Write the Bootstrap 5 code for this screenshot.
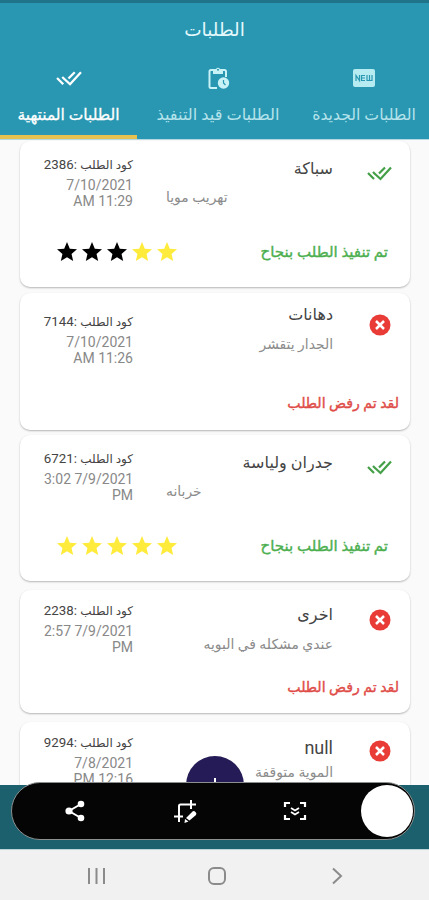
<!DOCTYPE html>
<html lang="ar" dir="rtl">
<head>
<meta charset="utf-8">
<meta name="viewport" content="width=device-width, initial-scale=1">
<title>الطلبات</title>
<link href="https://cdn.jsdelivr.net/npm/bootstrap@5.3.0/dist/css/bootstrap.min.css" rel="stylesheet">
<style>
body{font-family:Roboto,"DejaVu Sans",sans-serif;background:#fafafa;height:900px;overflow:hidden;color:#444}
svg{display:block;flex:none}
.app-head{height:139px;background:#2997b1;border-top:3px solid #1f7489;color:#e4f8fc}
.app-title{height:53px;padding-top:3px;font-size:18.5px}
.tab-item{width:130px;height:83px;color:#b5e3ec;font-size:15.7px;white-space:nowrap;border-bottom:4px solid transparent}
.tab-item.wide{font-size:16.2px}
.tab-item.current{color:#fff;border-color:#e5c24f;width:137px;font-size:15.5px;-webkit-text-stroke:.3px currentColor}
.tab-item span{line-height:24px;margin-top:12px}
.tab-item svg{margin-top:9px}
.orders{height:646px;padding:2px 19px 0 20px;border-top:1px solid #b4d9e3;overflow:hidden}
.order{border:0;border-radius:10px;box-shadow:0 1px 2px rgba(0,0,0,.28);width:390px;flex:none;height:146px;margin-bottom:6px;padding:0 11px 0 24px;
 --t:28px;--d:56px;--c:24px;--i:32px;--s:111px}
.order.first{margin-top:-1px}
.order.rej{height:137px;margin-bottom:5px;--t:22px;--d:51px;--c:29px}
.order.low{height:123px;margin-bottom:9px;--t:25px;--d:54px;--c:21px;--i:30px;--s:98px}
.order.before-low{margin-bottom:9px}
.order.last{height:136px;--t:26px;--d:50px;--i:29px}
.upper{height:calc(var(--s) - 13px)}
.state-icon{width:38px;padding-top:calc(var(--i) - 12px);padding-right:7px}
.subject{width:167px;margin-right:28px;padding-top:calc(var(--t) - 12px);white-space:nowrap}
.name{font-size:16px;line-height:24px}
.latin{font-size:18px}
.desc{font-size:13.9px;line-height:20px;color:#8b8b8b;margin-top:calc(var(--d) - var(--t) - 22px)}
.done .desc{text-align:left}
.meta{width:89px;margin-right:auto;padding-top:calc(var(--c) - 9px);font-size:13.3px;white-space:nowrap}
.code{line-height:18px;color:#444}
.code span{font-size:12px}
.when{font-size:14px;line-height:15.5px;color:#888;margin-top:4px;direction:ltr;text-align:right}
.lower{height:26px}
.msg{font-size:14.1px;-webkit-text-stroke:.4px currentColor;white-space:nowrap}
.done .msg{color:#4caf50;padding-right:11px;font-size:15px}
.rej .msg{color:#df4c48}
.stars{direction:ltr;gap:1px;margin-left:11px}
.fab{position:absolute;left:186px;top:756px;width:58px;height:58px;border-radius:50%;background:#251b57;color:#fff}
.dock{height:65px;background:#1b606c;border-bottom:1px solid #b9d4d8}
.pill{position:absolute;left:11px;top:782px;width:404px;height:58px;border-radius:29px;background:#050505;border:1px solid #8b8f8f;direction:ltr;padding:0 1px 0 50px;color:#fff}
.tool-group{width:246px}
.knob{width:52px;height:52px;border-radius:50%;background:#fff}
.sysnav{height:50px;background:#f1f1f1;direction:ltr;padding:2px 82px 0 86px}
</style>
</head>
<body class="position-relative d-flex flex-column">
<svg width="0" height="0" class="position-absolute">
 <defs>
  <g id="checks" fill="none" stroke="currentColor" stroke-width="2.2"><path d="M1 12l6 6M6 11l2.500 2.500M7.500 12.500L13.500 18 24 6.500M12 12.500L18 6.500"/></g>
  <path id="star" d="M12 17.270L18.180 21l-1.640-7.030L22 9.240l-7.190-.61L12 2 9.190 8.630 2 9.240l5.460 4.730L5.820 21z"/>
  <g id="cross"><circle cx="12" cy="12" r="10.500" fill="#e93c36"/><path d="M8 8l8 8M16 8l-8 8" stroke="#fff" stroke-width="2.500"/></g>
 </defs>
</svg>
<header class="app-head flex-shrink-0">
 <div class="app-title d-flex align-items-center justify-content-center">الطلبات</div>
 <nav class="d-flex">
  <div class="tab-item d-flex flex-column align-items-center">
   <svg width="24" height="26" viewBox="0 0 24 26"><rect x="1" y="4" width="22" height="18" rx="2" fill="#b5ebf1"/><path d="M4 16v-5.500l3.500 5V10M13 10.500H9.500v5H13M9.500 13H13M15 10v5.500h5V10M17.500 10v5" fill="none" stroke="#2997b1" stroke-width="1.200"/></svg>
   <span>الطلبات الجديدة</span>
  </div>
  <div class="tab-item wide d-flex flex-column align-items-center flex-grow-1">
   <svg width="24" height="26" viewBox="0 0 24 26"><path d="M11 23H5q-1.500 0-1.500-1.500v-15Q3.500 5 5 5h13.500Q20 5 20 6.500V12" fill="none" stroke="#c9f2f7" stroke-width="2"/><path d="M7 4h3a2.300 2.300 0 0 1 4 0h3v5H7z" fill="#c9f2f7"/><circle cx="12" cy="4.800" r="1" fill="#2997b1"/><circle cx="17.500" cy="18" r="5.700" fill="#c9f2f7"/><path d="M17.500 15v3l2 2" fill="none" stroke="#2997b1" stroke-width="1.200"/></svg>
   <span>الطلبات قيد التنفيذ</span>
  </div>
  <div class="tab-item current d-flex flex-column align-items-center">
   <svg width="26" height="26" viewBox="0 0 25 24"><use href="#checks"/></svg>
   <span>الطلبات المنتهية</span>
  </div>
 </nav>
</header>
<main class="orders position-relative d-flex flex-column flex-shrink-0">
 <article class="card order done first">
  <div class="upper d-flex">
   <div class="state-icon"><svg width="25" height="24" viewBox="0 0 25 24" color="#43a047"><use href="#checks"/></svg></div>
   <div class="subject"><div class="name">سباكة</div><div class="desc">تهريب مويا</div></div>
   <div class="meta"><div class="code"><span>كود الطلب</span> :2386</div><div class="when">7/10/2021<br>AM 11:29</div></div>
  </div>
  <div class="lower d-flex align-items-center justify-content-between">
   <div class="msg">تم تنفيذ الطلب بنجاح</div>
   <div class="stars d-flex"><svg width="24" height="24"><use href="#star"/></svg><svg width="24" height="24"><use href="#star"/></svg><svg width="24" height="24"><use href="#star"/></svg><svg width="24" height="24" fill="#ffeb3b"><use href="#star"/></svg><svg width="24" height="24" fill="#ffeb3b"><use href="#star"/></svg></div>
  </div>
 </article>
 <article class="card order rej">
  <div class="upper d-flex">
   <div class="state-icon"><svg width="24" height="24"><use href="#cross"/></svg></div>
   <div class="subject"><div class="name">دهانات</div><div class="desc">الجدار يتقشر</div></div>
   <div class="meta"><div class="code"><span>كود الطلب</span> :7144</div><div class="when">7/10/2021<br>AM 11:26</div></div>
  </div>
  <div class="lower d-flex align-items-center"><div class="msg">لقد تم رفض الطلب</div></div>
 </article>
 <article class="card order done before-low">
  <div class="upper d-flex">
   <div class="state-icon"><svg width="25" height="24" viewBox="0 0 25 24" color="#43a047"><use href="#checks"/></svg></div>
   <div class="subject"><div class="name">جدران ولياسة</div><div class="desc">خربانه</div></div>
   <div class="meta"><div class="code"><span>كود الطلب</span> :6721</div><div class="when">3:02 7/9/2021<br>PM</div></div>
  </div>
  <div class="lower d-flex align-items-center justify-content-between">
   <div class="msg">تم تنفيذ الطلب بنجاح</div>
   <div class="stars d-flex"><svg width="24" height="24" fill="#ffeb3b"><use href="#star"/></svg><svg width="24" height="24" fill="#ffeb3b"><use href="#star"/></svg><svg width="24" height="24" fill="#ffeb3b"><use href="#star"/></svg><svg width="24" height="24" fill="#ffeb3b"><use href="#star"/></svg><svg width="24" height="24" fill="#ffeb3b"><use href="#star"/></svg></div>
  </div>
 </article>
 <article class="card order rej low">
  <div class="upper d-flex">
   <div class="state-icon"><svg width="24" height="24"><use href="#cross"/></svg></div>
   <div class="subject"><div class="name">اخرى</div><div class="desc">عندي مشكله في البويه</div></div>
   <div class="meta"><div class="code"><span>كود الطلب</span> :2238</div><div class="when">2:57 7/9/2021<br>PM</div></div>
  </div>
  <div class="lower d-flex align-items-center"><div class="msg">لقد تم رفض الطلب</div></div>
 </article>
 <article class="card order rej low last">
  <div class="upper d-flex">
   <div class="state-icon"><svg width="24" height="24"><use href="#cross"/></svg></div>
   <div class="subject"><div class="name latin">null</div><div class="desc">الموية متوقفة</div></div>
   <div class="meta"><div class="code"><span>كود الطلب</span> :9294</div><div class="when">7/8/2021<br>PM 12:16</div></div>
  </div>
 </article>
</main>
<div class="dock flex-shrink-0"></div>
<button class="fab btn border-0 p-0 d-flex align-items-center justify-content-center" aria-label="إضافة"><svg width="24" height="24"><path d="M12 5v14M5 12h14" stroke="#fff" stroke-width="2"/></svg></button>
<div class="pill d-flex align-items-center justify-content-between">
 <div class="tool-group d-flex justify-content-between">
  <svg width="26" height="26" viewBox="0 0 26 26"><path d="M19 6L7 13l12 7" fill="none" stroke="#fff" stroke-width="2"/><g fill="#fff"><circle cx="19" cy="6" r="3.300"/><circle cx="7" cy="13" r="3.600"/><circle cx="19" cy="20" r="3.300"/></g></svg>
  <svg width="26" height="26" viewBox="0 0 26 26"><path d="M7 24V8q0-1.500 1.500-1.500H24M2 18.500h9M19 2v9" fill="none" stroke="#fff" stroke-width="2"/><path d="M14 20l6.500-6.500q1.500-1 3 .5t.5 3L17.500 22.500zM13 21l3.500 2.500-4 1.500z" fill="#fff"/></svg>
  <svg width="26" height="26" viewBox="0 0 26 26"><path d="M3 9V5h5M18 5h5v4M23 17v4h-5M8 21H3v-4" fill="none" stroke="#fff" stroke-width="2.200"/><path d="M9 10l4 2.500 4-2.500M9 14l4 2.500 4-2.500" fill="none" stroke="#fff" stroke-width="1.800"/></svg>
 </div>
 <div class="knob"></div>
</div>
<footer class="sysnav d-flex align-items-center justify-content-between flex-shrink-0">
 <svg width="20" height="20"><path d="M3 2v16M10.500 2v16M18 2v16" stroke="#8b8b8b" stroke-width="2"/></svg>
 <svg width="20" height="20"><rect x="2" y="2" width="16" height="16" rx="5" fill="none" stroke="#8b8b8b" stroke-width="2"/></svg>
 <svg width="20" height="20"><path d="M6 2.500l8 7.500-8 7.500" fill="none" stroke="#8b8b8b" stroke-width="2"/></svg>
</footer>
<script src="https://cdn.jsdelivr.net/npm/bootstrap@5.3.0/dist/js/bootstrap.bundle.min.js"></script>
</body>
</html>
